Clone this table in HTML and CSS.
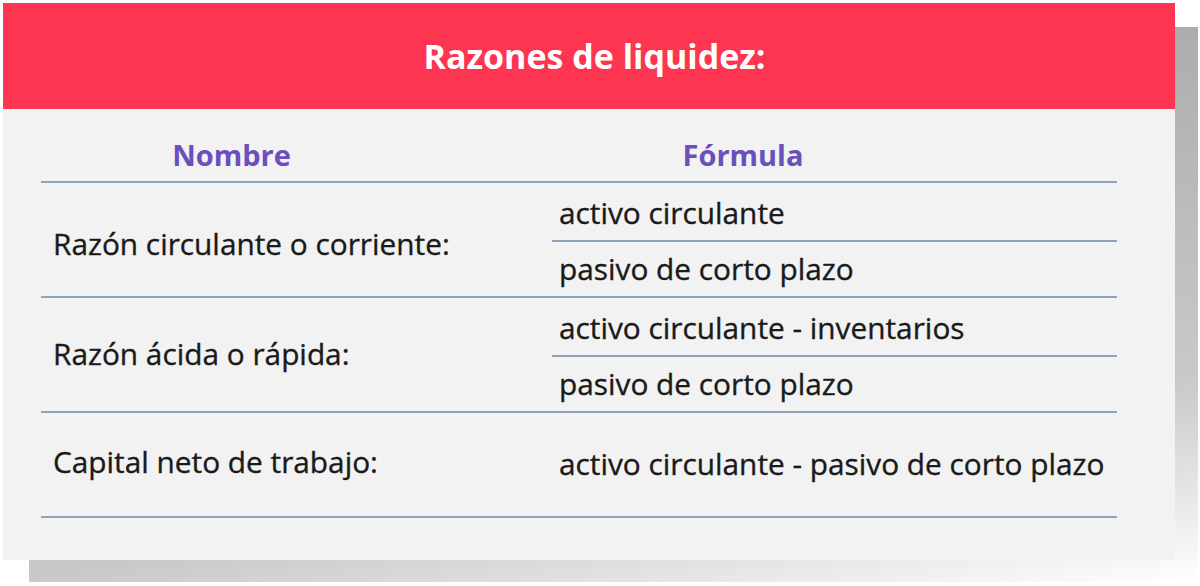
FILE: index.html
```html
<!DOCTYPE html>
<html lang="es">
<head>
<meta charset="utf-8">
<link rel="stylesheet" href="styles.css">
</head>
<body>
<div class="wrap">
  <div class="shadow"></div>
  <div class="card">
    <div class="card-head">Razones de liquidez:</div>
    <div class="card-body">
      <div class="table">
        <div class="row head">
          <div class="cell th th-name">Nombre</div>
          <div class="cell th th-formula">Fórmula</div>
        </div>
        <div class="row r-frac">
          <div class="cell name name-first">Razón circulante o corriente:</div>
          <div class="cell formula">
            <div class="num">activo circulante</div>
            <div class="den">pasivo de corto plazo</div>
          </div>
        </div>
        <div class="row r-frac">
          <div class="cell name">Razón ácida o rápida:</div>
          <div class="cell formula">
            <div class="num">activo circulante - inventarios</div>
            <div class="den">pasivo de corto plazo</div>
          </div>
        </div>
        <div class="row r-single">
          <div class="cell name name-last">Capital neto de trabajo:</div>
          <div class="cell formula single">activo circulante - pasivo de corto plazo</div>
        </div>
      </div>
    </div>
  </div>
</div>
</body>
</html>
```
FILE: styles.css
```css
* { box-sizing: border-box; }
html, body { margin: 0; padding: 0; background: #ffffff; }
body {
  font-family: "Open Sans", "Noto Sans", sans-serif;
  width: 1200px;
  height: 586px;
  overflow: hidden;
}
.wrap {
  position: relative;
  padding: 3px 0 0 3px;
}
.shadow {
  position: absolute;
  left: 29px;
  top: 27px;
  width: 1169px;
  height: 555px;
  background: linear-gradient(170deg, #a6a6a6 0%, #adadad 27%, #c9c9c9 73%, #e2e2e2 86%, #ffffff 100%);
}
.card {
  position: relative;
  width: 1172px;
  height: 557px;
  background: #f2f2f2;
}
.card-head {
  height: 106px;
  background: #fd3550;
  color: #ffffff;
  font-weight: 700;
  font-size: 34px;
  display: flex;
  align-items: center;
  justify-content: center;
  padding-left: 11px;
  padding-bottom: 0;
}
.card-body {
  padding: 0 58px 0 38px;
}
.row {
  display: grid;
  grid-template-columns: 511px 565px;
  border-bottom: 2px solid #8fa2ba;
}
.row.head { height: 74px; }
.row.r-frac { height: 115px; }
.row.r-single { height: 105px; }
.cell { display: flex; align-items: center; }
.th {
  color: #6a4fbd;
  font-weight: 700;
  font-size: 29px;
  justify-content: center;
  padding-top: 18px;
}
.th-name { padding-right: 130px; }
.th-formula { padding-right: 183px; }
.name {
  font-size: 29.8px;
  font-weight: 400;
  color: #1a1a1a;
  padding-left: 12px;
  padding-bottom: 2px;
  -webkit-text-stroke: 0.35px #1a1a1a;
}
.name.name-first { padding-bottom: 0; padding-top: 8px; }
.name.name-last { padding-bottom: 7px; }
.formula {
  flex-direction: column;
  align-items: stretch;
  font-size: 29.8px;
  font-weight: 400;
  color: #1a1a1a;
  -webkit-text-stroke: 0.35px #1a1a1a;
}
.num, .den {
  flex: 1;
  display: flex;
  align-items: center;
  padding-left: 7px;
}
.num { border-bottom: 2px solid #8fa2ba; padding-top: 2px; }
.den { padding-bottom: 0; }
.formula.single {
  flex-direction: row;
  align-items: center;
  padding-left: 7px;
  padding-bottom: 3px;
}
```
